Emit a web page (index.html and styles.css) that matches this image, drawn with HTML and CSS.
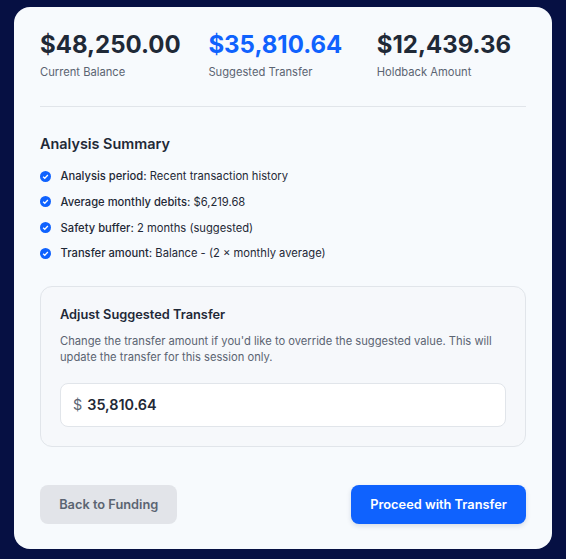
FILE: index.html
```html
<!DOCTYPE html>
<html lang="en">
<head>
<meta charset="utf-8">
<title>Transfer</title>
<link rel="stylesheet" href="styles.css">
</head>
<body>
<main class="card">
  <section class="stats">
    <div class="stat"><div class="value">$48,250.00</div><div class="label">Current Balance</div></div>
    <div class="stat"><div class="value accent">$35,810.64</div><div class="label">Suggested Transfer</div></div>
    <div class="stat"><div class="value">$12,439.36</div><div class="label">Holdback Amount</div></div>
  </section>
  <section class="summary">
    <h2>Analysis Summary</h2>
    <ul>
      <li><svg class="check" viewBox="0 0 12 12"><circle cx="6" cy="6" r="6" fill="#0f62fe"/><path d="M3.4 6.2 5.2 7.9 8.6 4.4" fill="none" stroke="#fff" stroke-width="1.4"/></svg><span><b>Analysis period:</b> Recent transaction history</span></li>
      <li><svg class="check" viewBox="0 0 12 12"><circle cx="6" cy="6" r="6" fill="#0f62fe"/><path d="M3.4 6.2 5.2 7.9 8.6 4.4" fill="none" stroke="#fff" stroke-width="1.4"/></svg><span><b>Average monthly debits:</b> $6,219.68</span></li>
      <li><svg class="check" viewBox="0 0 12 12"><circle cx="6" cy="6" r="6" fill="#0f62fe"/><path d="M3.4 6.2 5.2 7.9 8.6 4.4" fill="none" stroke="#fff" stroke-width="1.4"/></svg><span><b>Safety buffer:</b> 2 months (suggested)</span></li>
      <li><svg class="check" viewBox="0 0 12 12"><circle cx="6" cy="6" r="6" fill="#0f62fe"/><path d="M3.4 6.2 5.2 7.9 8.6 4.4" fill="none" stroke="#fff" stroke-width="1.4"/></svg><span><b>Transfer amount:</b> Balance - (2 × monthly average)</span></li>
    </ul>
  </section>
  <section class="adjust">
    <h3>Adjust Suggested Transfer</h3>
    <p>Change the transfer amount if you'd like to override the suggested value. This will update the transfer for this session only.</p>
    <div class="field"><span class="currency">$</span><span class="amount">35,810.64</span></div>
  </section>
  <div class="actions">
    <button class="btn secondary" type="button">Back to Funding</button>
    <button class="btn primary" type="button">Proceed with Transfer</button>
  </div>
</main>
</body>
</html>
```
FILE: styles.css
```css
* { box-sizing: border-box; }
html, body { height: 100%; }
body {
  margin: 0;
  background: #061043;
  font-family: Inter, "Liberation Sans", sans-serif;
  padding: 7px 14px 10px;
  overflow: hidden;
}
.card {
  width: 538px;
  height: 542px;
  background: #f7fafd;
  border-radius: 16px;
  padding: 23px 26px;
  display: flex;
  flex-direction: column;
}
.stats {
  display: grid;
  grid-template-columns: repeat(3, 1fr);
  column-gap: 19.2px;
  height: 77px;
  border-bottom: 1px solid #e1e5ea;
}
.value {
  font-size: 24px;
  line-height: 30px;
  font-weight: 700;
  color: #1f2937;
  white-space: nowrap;
}
.value.accent { color: #0f62fe; }
.label {
  margin-top: 4px;
  font-size: 11.2px;
  line-height: 16px;
  color: #5b6472;
}
.summary { margin-top: 27px; }
h2 {
  margin: 0;
  font-size: 14.4px;
  line-height: 20px;
  font-weight: 600;
  color: #1f2937;
}
ul {
  list-style: none;
  margin: 14.4px 0 0;
  padding: 0;
  display: flex;
  flex-direction: column;
  gap: 9.6px;
}
li {
  display: flex;
  align-items: center;
  gap: 9.6px;
  font-size: 11.2px;
  line-height: 16px;
  color: #1f2937;
}
li b { font-weight: 500; }
.check { width: 11px; height: 11px; flex: none; }
.adjust {
  margin-top: 24.6px;
  height: 161px;
  background: #f6f8fb;
  border: 1px solid #e1e5ea;
  border-radius: 12px;
  padding: 19px;
}
h3 {
  margin: 0;
  font-size: 12.8px;
  line-height: 18px;
  font-weight: 600;
  color: #1f2937;
}
.adjust p {
  margin: 9px 0 0;
  font-size: 11.2px;
  line-height: 16px;
  color: #5b6472;
}
.field {
  margin-top: 18px;
  height: 44px;
  background: #fff;
  border: 1px solid #e1e5ea;
  border-radius: 8px;
  display: flex;
  align-items: center;
  gap: 5px;
  padding: 0 12px;
}
.currency { font-size: 14.4px; color: #5b6472; }
.amount { font-size: 14.4px; font-weight: 600; color: #1f2937; }
.actions {
  margin-top: 38px;
  display: flex;
  justify-content: space-between;
}
.btn {
  height: 39px;
  border: 0;
  border-radius: 8px;
  font-family: inherit;
  font-size: 12.8px;
  font-weight: 600;
  padding: 0 19.2px;
}
.btn.secondary { background: #e2e4e9; color: #5b6472; }
.btn.primary { background: #0f62fe; color: #fff; box-shadow: 0 2px 5px rgba(15, 40, 90, 0.14); }
```
